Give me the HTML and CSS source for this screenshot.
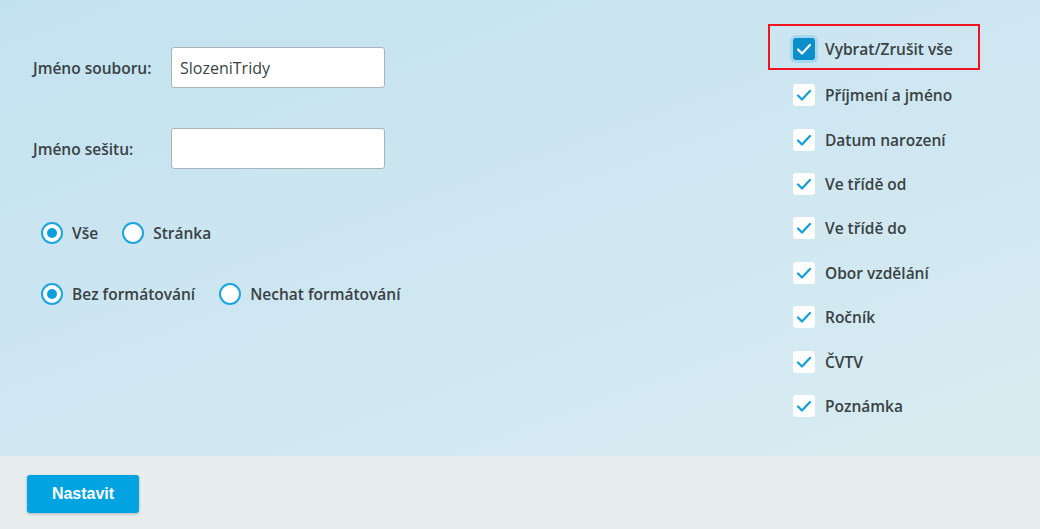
FILE: index.html
```html
<!DOCTYPE html>
<html>

<head>
  <meta charset="UTF-8">
  <meta name="viewport" content="width=device-width, initial-scale=1">
  <title>Export</title>

  <link rel="stylesheet" href="styles.css">
</head>

<body>

  <div class="main">
    <div class="left">
      <div class="form-row first">
        <label for="file">Jméno souboru:</label>
        <input type="text" id="file" value="SlozeniTridy">
      </div>
      <div class="form-row">
        <label for="sheet">Jméno sešitu:</label>
        <input type="text" id="sheet">
      </div>

      <div class="radio-row first">
        <label class="radio"><span class="dot on"></span>Vše</label>
        <label class="radio"><span class="dot"></span>Stránka</label>
      </div>
      <div class="radio-row">
        <label class="radio"><span class="dot on"></span>Bez formátování</label>
        <label class="radio"><span class="dot"></span>Nechat formátování</label>
      </div>
    </div>

    <div class="right">
      <div class="select-all">
        <label class="check all">
          <span class="box">
            <svg viewBox="0 0 22 22" width="22" height="22"><path d="M5 11.5l4 4 8-8.5" fill="none" stroke="#fff" stroke-width="2.2" stroke-linecap="round" stroke-linejoin="round"/></svg>
          </span>
          Vybrat/Zrušit vše
        </label>
      </div>
      <div class="checks">
        <label class="check"><span class="box"><svg viewBox="0 0 22 22" width="22" height="22"><path d="M5 11.5l4 4 8-8.5" fill="none" stroke="#10a0dc" stroke-width="2.2" stroke-linecap="round" stroke-linejoin="round"/></svg></span>Příjmení a jméno</label>
        <label class="check"><span class="box"><svg viewBox="0 0 22 22" width="22" height="22"><path d="M5 11.5l4 4 8-8.5" fill="none" stroke="#10a0dc" stroke-width="2.2" stroke-linecap="round" stroke-linejoin="round"/></svg></span>Datum narození</label>
        <label class="check"><span class="box"><svg viewBox="0 0 22 22" width="22" height="22"><path d="M5 11.5l4 4 8-8.5" fill="none" stroke="#10a0dc" stroke-width="2.2" stroke-linecap="round" stroke-linejoin="round"/></svg></span>Ve třídě od</label>
        <label class="check"><span class="box"><svg viewBox="0 0 22 22" width="22" height="22"><path d="M5 11.5l4 4 8-8.5" fill="none" stroke="#10a0dc" stroke-width="2.2" stroke-linecap="round" stroke-linejoin="round"/></svg></span>Ve třídě do</label>
        <label class="check"><span class="box"><svg viewBox="0 0 22 22" width="22" height="22"><path d="M5 11.5l4 4 8-8.5" fill="none" stroke="#10a0dc" stroke-width="2.2" stroke-linecap="round" stroke-linejoin="round"/></svg></span>Obor vzdělání</label>
        <label class="check"><span class="box"><svg viewBox="0 0 22 22" width="22" height="22"><path d="M5 11.5l4 4 8-8.5" fill="none" stroke="#10a0dc" stroke-width="2.2" stroke-linecap="round" stroke-linejoin="round"/></svg></span>Ročník</label>
        <label class="check"><span class="box"><svg viewBox="0 0 22 22" width="22" height="22"><path d="M5 11.5l4 4 8-8.5" fill="none" stroke="#10a0dc" stroke-width="2.2" stroke-linecap="round" stroke-linejoin="round"/></svg></span>ČVTV</label>
        <label class="check"><span class="box"><svg viewBox="0 0 22 22" width="22" height="22"><path d="M5 11.5l4 4 8-8.5" fill="none" stroke="#10a0dc" stroke-width="2.2" stroke-linecap="round" stroke-linejoin="round"/></svg></span>Poznámka</label>
      </div>
    </div>
  </div>

  <div class="footer">
    <button type="submit">Nastavit</button>
  </div>

</body>

</html>
```

FILE: styles.css
```css
body {
  margin: 0;
  font-family: "Open Sans", "DejaVu Sans", sans-serif;
  font-weight: 600;
  font-size: 15.5px;
  color: #394144;
}

.main {
  height: 456px;
  display: flex;
  background: linear-gradient(160deg, #c3e2f0 0%, #cfe7f1 55%, #d9ecf1 100%);
}

.left {
  width: 768px;
  padding-left: 33px;
  box-sizing: border-box;
}

.form-row {
  display: flex;
  align-items: center;
  margin-top: 40px;
}

.form-row.first {
  margin-top: 47px;
}

.form-row label {
  width: 138px;
}

.form-row input {
  width: 214px;
  height: 41px;
  box-sizing: border-box;
  border: 1px solid #a9b3b8;
  border-radius: 3px;
  padding: 0 8px;
  outline: 0;
  font-family: "Open Sans", sans-serif;
  font-size: 16px;
  font-weight: 400;
  color: #3b4346;
  background: #fff;
}

.radio-row {
  display: flex;
  align-items: center;
  gap: 24px;
  margin-top: 39px;
  padding-left: 8px;
}

.radio-row.first {
  margin-top: 53px;
}

.radio {
  display: flex;
  align-items: center;
  gap: 9px;
}

.dot {
  width: 18px;
  height: 18px;
  border: 2px solid #1ba5e0;
  border-radius: 50%;
  background: #fff;
  position: relative;
}

.dot.on::after {
  content: "";
  position: absolute;
  left: 4px;
  top: 4px;
  width: 10px;
  height: 10px;
  border-radius: 50%;
  background: #0aa0e0;
}

.right {
  padding-top: 24px;
}

.select-all {
  width: 212px;
  height: 46px;
  box-sizing: border-box;
  border: 2px solid #f0141e;
  display: flex;
  align-items: center;
  padding: 4px 0 0 23px;
}

.checks {
  display: flex;
  flex-direction: column;
  padding: 3px 0 0 25px;
}

.check {
  display: flex;
  align-items: center;
  gap: 10px;
  height: 44.4px;
}

.box {
  width: 22px;
  height: 22px;
  border-radius: 3px;
  background: #fff;
  display: flex;
}

.check.all .box {
  background: #0a8fcb;
  box-shadow: 0 0 0 3px #a6d8ef;
}

.footer {
  height: 73px;
  background: #e8edee;
  padding: 19px 0 0 27px;
  box-sizing: border-box;
}

button[type="submit"] {
  width: 112px;
  height: 38px;
  border: none;
  border-radius: 3px;
  background: #03a3e1;
  color: #fff;
  font-family: "Liberation Sans", Arial, sans-serif;
  font-weight: bold;
  font-size: 16px;
  box-shadow: 0 1px 3px rgba(0, 0, 0, 0.25);
}
```
